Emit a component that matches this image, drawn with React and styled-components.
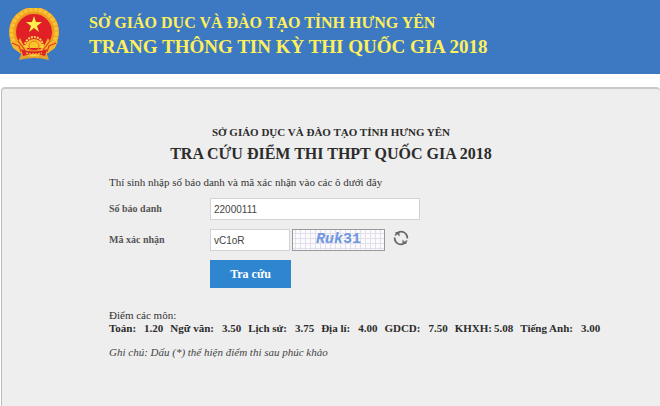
import React, { useState } from "react";
import styled, { createGlobalStyle } from "styled-components";

const GlobalStyle = createGlobalStyle`
  * { box-sizing: border-box; }
  body {
    margin: 0;
    background: #fff;
    color: #333;
    font-family: "Liberation Serif", "Times New Roman", serif;
    font-size: 11px;
    line-height: 14px;
  }
  h1, h2, p, dl, dt, dd { margin: 0; }
`;

const Page = styled.div`
  display: flex;
  flex-direction: column;
  min-height: 100vh;
`;

const Banner = styled.header`
  display: flex;
  gap: 29px;
  padding: 8px;
  height: 74px;
  background: #3d79c2;
  color: #fdf05a;
  font-weight: bold;
`;

const BannerText = styled.div`
  padding-top: 5px;
`;

const Department = styled.p`
  font-size: 16px;
  line-height: 20px;
`;

const SiteTitle = styled.h1`
  font-size: 19px;
  line-height: 28px;
`;

const Panel = styled.main`
  flex: 1;
  margin: 13px 0 0 1px;
  padding: 36px 0 40px;
  background: #eee;
  border: 1px solid #bdbdbd;
  border-top: 2px solid #c8c8c8;
  border-right: 0;
  border-bottom: 0;
  border-radius: 4px 4px 0 0;
`;

const Heading = styled.div`
  text-align: center;
  font-weight: bold;
  color: #2c2c2c;
`;

const Subtitle = styled.p`
  font-size: 11px;
  line-height: 14px;
`;

const Title = styled.h2`
  font-size: 16px;
  line-height: 30px;
`;

const Content = styled.div`
  padding-left: 107px;
`;

const Form = styled.form`
  display: flex;
  flex-direction: column;
  gap: 9px;
  margin-top: 6px;
`;

const Intro = styled.p`
  line-height: 14px;
`;

const Row = styled.div`
  display: grid;
  grid-template-columns: 101px 1fr;
  align-items: center;
`;

const Label = styled.label`
  font-size: 10px;
  font-weight: bold;
  color: #555;
`;

const Controls = styled.div`
  display: flex;
  align-items: center;
  gap: 2px;
  grid-column: 2;
`;

const TextInput = styled.input`
  width: ${(p) => (p.$short ? 80 : 210)}px;
  height: 22px;
  padding: 0 3px;
  border: 1px solid #d3d3d3;
  background: #fff;
  color: #444;
  font: 10px "Liberation Sans", Arial, sans-serif;
`;

const Captcha = styled.div`
  display: flex;
  align-items: center;
  justify-content: center;
  width: 93px;
  height: 22px;
  border: 1px solid #999;
  background:
    linear-gradient(90deg, #e2dfea 1px, transparent 1px) 2px 0 / 5px 5px,
    linear-gradient(#e2dfea 1px, transparent 1px) 0 3px / 5px 5px,
    #fbfafc;
  color: #6f98e0;
  font: bold 15px/18px "Liberation Mono", "Courier New", monospace;
`;

const Slanted = styled.span`
  font-style: italic;
`;

const RefreshButton = styled.button`
  display: flex;
  margin-left: 6px;
  padding: 0 0 4px;
  border: 0;
  background: none;
  cursor: pointer;
`;

const SubmitButton = styled.button`
  width: 81px;
  height: 28px;
  border: 0;
  background: #2f86d0;
  color: #fff;
  font: bold 12px "Liberation Serif", "Times New Roman", serif;
  cursor: pointer;
`;

const Results = styled.section`
  margin-top: 20px;
`;

const ScoreList = styled.dl`
  display: flex;
  flex-wrap: wrap;
  gap: 0 7px;
  font-size: 11px;
  line-height: 12px;
  font-weight: bold;
  color: #2c2c2c;
`;

const Score = styled.div`
  display: flex;
  gap: ${(p) => (p.$tight ? 2 : 8)}px;
`;

const Note = styled.p`
  margin-top: 11px;
  font-style: italic;
  color: #444;
`;

const scores = [
  ["Toán:", "1.20"],
  ["Ngữ văn:", "3.50"],
  ["Lịch sử:", "3.75"],
  ["Địa lí:", "4.00"],
  ["GDCD:", "7.50"],
  ["KHXH:", "5.08", true],
  ["Tiếng Anh:", "3.00"],
];

function Emblem() {
  return (
    <svg width="52" height="54" viewBox="0 0 52 54" role="img" aria-label="Quốc huy Việt Nam">
      <path d="M14 43 L38 43 L41 52 Q26 48 11 52 Z" fill="#e5a02b" />
      <circle cx="26" cy="25" r="22" fill="#e01f26" />
      <circle cx="26" cy="24" r="21.5" fill="none" stroke="#f0a020" strokeWidth="7" />
      <circle cx="26" cy="24" r="22.5" fill="none" stroke="#f7c233" strokeWidth="4" strokeDasharray="4 1" />
      <circle cx="26" cy="24" r="19" fill="none" stroke="#ef8f1f" strokeWidth="1" strokeDasharray="2 2" />
      <path d="M26 8l2 6h6l-5 4 2 6-5-4-5 4 2-6-5-4h6z" fill="#fff04a" />
      <path d="M17 40a9 9 0 0 1 18 0z" fill="#f8c52d" />
      <circle cx="26" cy="38" r="9" fill="none" stroke="#fbd64a" strokeWidth="2" strokeDasharray="2 1" />
      <circle cx="26" cy="38" r="5" fill="none" stroke="#e8731f" strokeWidth="1" />
      <path d="M2 33l8 1 2-4 3 6 4 7-7 2-7-5zM50 33l-8 1-2-4-3 6-4 7 7 2 7-5z" fill="#f6b429" />
      <path d="M4 35l7 3 2 6M48 35l-7 3-2 6M10 33l7 9M42 33l-7 9" stroke="#df3b22" strokeWidth="1.2" fill="none" />
      <path d="M13 41q13 5 26 0l-2 7q-11-4-22 0z" fill="#dd2429" />
      <path d="M18 45q8 2 16 0" stroke="#f6b429" strokeWidth="1.4" strokeDasharray="2 1" fill="none" />
    </svg>
  );
}

function RefreshIcon() {
  return (
    <svg width="16" height="16" viewBox="0 0 16 16" aria-hidden="true">
      <path d="M5 2.4A6.3 6.3 0 0 1 14.3 8.5M11 13.6A6.3 6.3 0 0 1 1.7 7.5M2.2 5.5A6.3 6.3 0 0 1 4 3.2M13.8 10.5A6.3 6.3 0 0 1 12 12.8M1.7 7.5A6.3 6.3 0 0 0 3.4 12.3M14.3 8.5A6.3 6.3 0 0 0 12.6 3.7" fill="none" stroke="#686868" strokeWidth="1.7" />
      <path d="M2 2h4.5v4.5zM14 14H9.5V9.5z" fill="#686868" />
    </svg>
  );
}

export default function App() {
  const [candidate, setCandidate] = useState("22000111");
  const [code, setCode] = useState("vC1oR");

  return (
    <Page>
      <GlobalStyle />
      <Banner>
        <Emblem />
        <BannerText>
          <Department>SỞ GIÁO DỤC VÀ ĐÀO TẠO TỈNH HƯNG YÊN</Department>
          <SiteTitle>TRANG THÔNG TIN KỲ THI QUỐC GIA 2018</SiteTitle>
        </BannerText>
      </Banner>
      <Panel>
        <Heading>
          <Subtitle>SỞ GIÁO DỤC VÀ ĐÀO TẠO TỈNH HƯNG YÊN</Subtitle>
          <Title>TRA CỨU ĐIỂM THI THPT QUỐC GIA 2018</Title>
        </Heading>
        <Content>
          <Form onSubmit={(e) => e.preventDefault()}>
            <Intro>Thí sinh nhập số báo danh và mã xác nhận vào các ô dưới đây</Intro>
            <Row>
              <Label htmlFor="candidate">Số báo danh</Label>
              <Controls>
                <TextInput id="candidate" value={candidate} onChange={(e) => setCandidate(e.target.value)} />
              </Controls>
            </Row>
            <Row>
              <Label htmlFor="code">Mã xác nhận</Label>
              <Controls>
                <TextInput id="code" $short value={code} onChange={(e) => setCode(e.target.value)} />
                <Captcha>
                  <Slanted>Ruk</Slanted>31
                </Captcha>
                <RefreshButton type="button" aria-label="Đổi mã xác nhận">
                  <RefreshIcon />
                </RefreshButton>
              </Controls>
            </Row>
            <Row>
              <Controls>
                <SubmitButton type="submit">Tra cứu</SubmitButton>
              </Controls>
            </Row>
          </Form>
          <Results>
            <p>Điểm các môn:</p>
            <ScoreList>
              {scores.map(([subject, mark, tight]) => (
                <Score key={subject} $tight={tight}>
                  <dt>{subject}</dt>
                  <dd>{mark}</dd>
                </Score>
              ))}
            </ScoreList>
            <Note>Ghi chú: Dấu (*) thể hiện điểm thi sau phúc khảo</Note>
          </Results>
        </Content>
      </Panel>
    </Page>
  );
}
